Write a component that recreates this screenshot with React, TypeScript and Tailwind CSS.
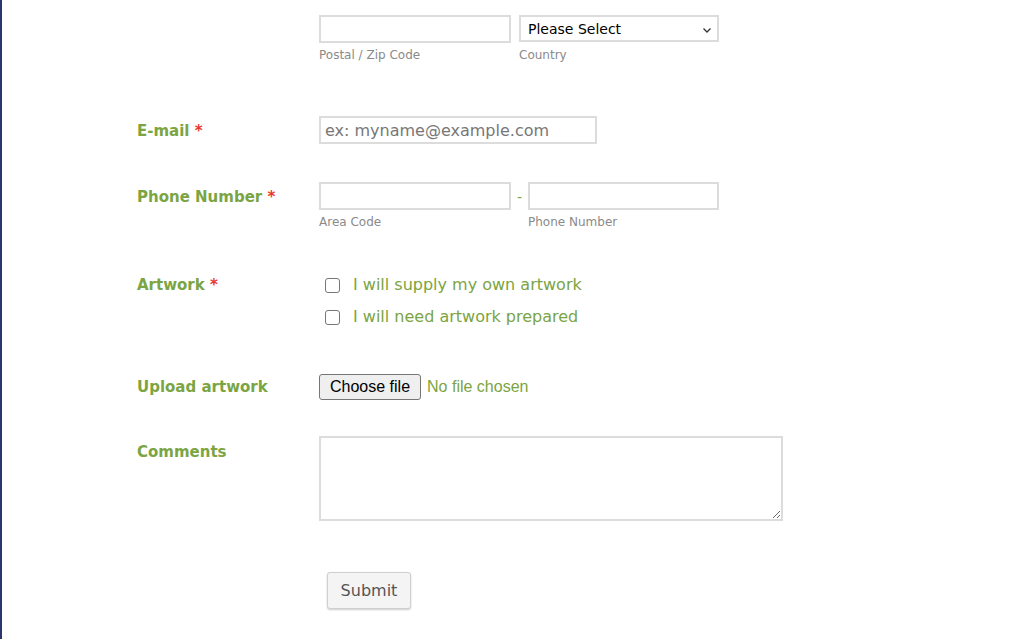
import React from "react";

const font = { fontFamily: "Tahoma, 'DejaVu Sans', Verdana, sans-serif" };

function Label({ children, req }: { children: React.ReactNode; req?: boolean }) {
  return (
    <div className="w-[182px] shrink-0 text-[15px] font-bold text-[#7ba442]">
      {children}
      {req && <span className="text-[#e8382e]"> *</span>}
    </div>
  );
}

function Sub({ children }: { children: React.ReactNode }) {
  return <div className="mt-[3px] text-[12px] text-[#8a8a8a]">{children}</div>;
}

const inputCls = "h-[28px] border-2 border-[#dcdcdc] bg-white px-1 outline-none";

export default function App() {
  return (
    <div className="flex h-[639px] w-[1024px] overflow-hidden bg-white" style={font}>
      <div className="w-[2px] shrink-0 bg-[#2b356e]" />
      <form className="flex-1 pl-[135px] pt-[15px]">
        {/* address tail */}
        <div className="flex pl-[182px]">
          <div className="w-[192px]">
            <input className={`${inputCls} w-[192px]`} />
            <Sub>Postal / Zip Code</Sub>
          </div>
          <div className="ml-[8px] w-[200px]">
            <div className="flex h-[27px] w-[200px] items-center justify-between border-2 border-[#dcdcdc] pl-[7px] pr-[4px] pt-[2px] text-[14px] text-black">
              <span>Please Select</span>
              <svg width="12" height="12" viewBox="0 0 12 12" fill="none" stroke="#333" strokeWidth="1.3">
                <path d="M2.5 4.5 L6 8 L9.5 4.5" />
              </svg>
            </div>
            <div className="mt-[4px] text-[12px] text-[#8a8a8a]">Country</div>
          </div>
        </div>

        {/* email */}
        <div className="mt-[52px] flex">
          <div className="pt-[4px]">
            <Label req>E-mail</Label>
          </div>
          <input
            className={`${inputCls} w-[278px] text-[16px] placeholder:text-[#777]`}
            placeholder="ex: myname@example.com"
          />
        </div>

        {/* phone */}
        <div className="mt-[38px] flex">
          <div className="pt-[4px]">
            <Label req>Phone Number</Label>
          </div>
          <div>
            <input className={`${inputCls} w-[192px]`} />
            <Sub>Area Code</Sub>
          </div>
          <div className="w-[17px] pt-[5px] text-center text-[14px] text-[#7ba442]">-</div>
          <div>
            <input className={`${inputCls} w-[191px]`} />
            <Sub>Phone Number</Sub>
          </div>
        </div>

        {/* artwork */}
        <div className="mt-[42px] flex">
          <div className="pt-[1px]">
            <Label req>Artwork</Label>
          </div>
          <div className="flex flex-col gap-[8px] pl-[6px]">
            <label className="flex items-center gap-[13px] text-[16px] text-[#7ba442]">
              <input type="checkbox" className="m-0 h-[15px] w-[15px] appearance-none rounded-[3px] border border-[#777] bg-white" />
              I will supply my own artwork
            </label>
            <label className="flex items-center gap-[13px] text-[16px] text-[#7ba442]">
              <input type="checkbox" className="m-0 h-[15px] w-[15px] appearance-none rounded-[3px] border border-[#777] bg-white" />
              I will need artwork prepared
            </label>
          </div>
        </div>

        {/* upload */}
        <div className="mt-[45px] flex items-center">
          <Label>Upload artwork</Label>
          <div className="flex items-center gap-[6px]" style={{ fontFamily: "Arial, 'Liberation Sans', sans-serif" }}>
            <button
              type="button"
              className="h-[26px] rounded-[3px] border border-[#767676] bg-[#efefef] px-[10px] text-[16px] text-black"
            >
              Choose file
            </button>
            <span className="text-[16px] text-[#7ba442]">No file chosen</span>
          </div>
        </div>

        {/* comments */}
        <div className="mt-[36px] flex">
          <div className="pt-[5px]">
            <Label>Comments</Label>
          </div>
          <textarea className="h-[85px] w-[464px] resize border-2 border-[#dcdcdc] outline-none" />
        </div>

        {/* submit */}
        <div className="mt-[51px] pl-[190px]">
          <button
            type="button"
            className="h-[37px] w-[84px] rounded-[3px] border border-[#cfcfcf] bg-[#f4f4f4] text-[16px] text-[#555] shadow-[0_1px_2px_rgba(0,0,0,0.2)]"
          >
            Submit
          </button>
        </div>
      </form>
    </div>
  );
}
